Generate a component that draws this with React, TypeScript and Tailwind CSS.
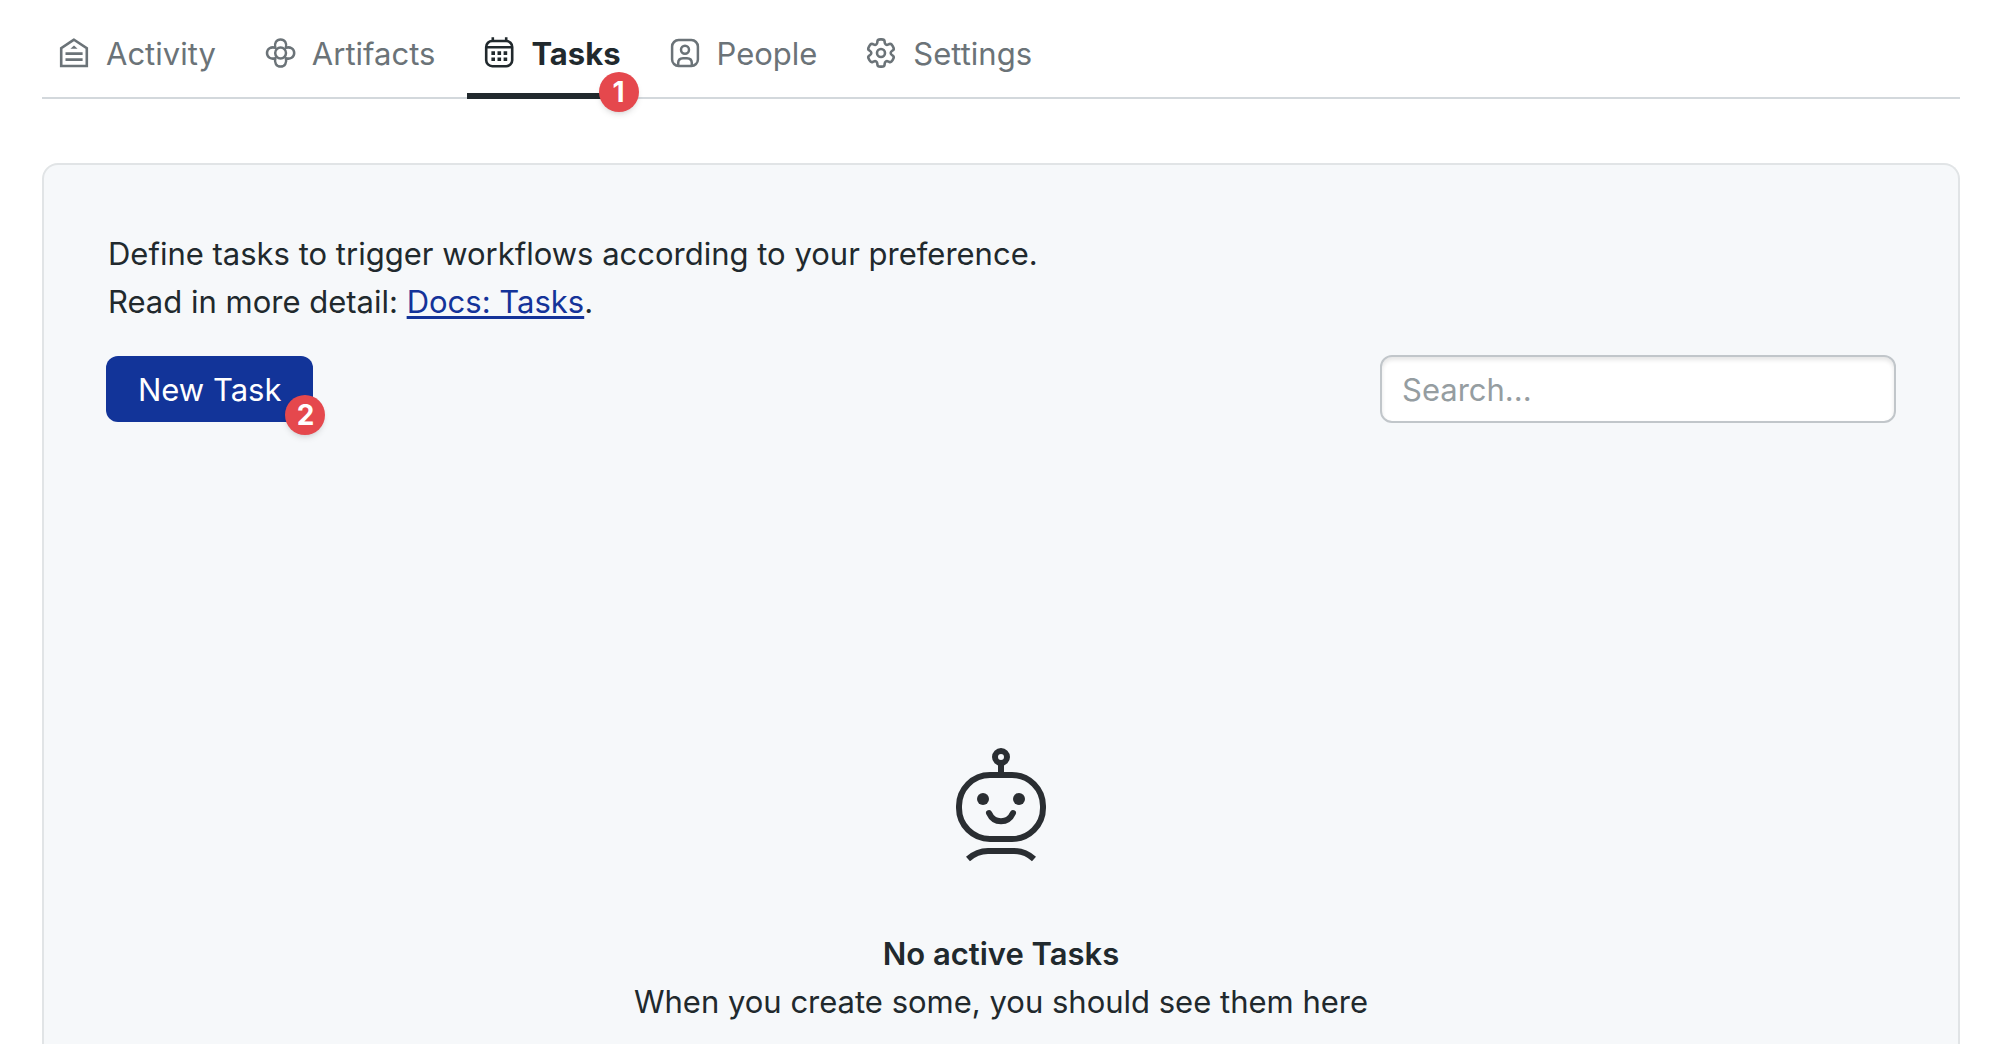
import type { ReactNode } from "react";

function ActivityIcon() {
  return (
    <svg viewBox="0 0 32 32" className="mt-2 size-8 shrink-0" fill="none" stroke="currentColor" strokeWidth="2.6" aria-hidden="true">
      <path d="M16 2.7 L3.2 11.2 V29 H28.8 V11.2 Z" />
      <path d="M7.5 16.6 H24.6 M7.5 22.6 H24.6" />
      <path d="M16 8.4 L19.6 11.8 H12.4 Z" fill="currentColor" stroke="none" />
    </svg>
  );
}

function ArtifactsIcon() {
  return (
    <svg viewBox="0 0 32 32" className="mt-2 size-8 shrink-0" fill="none" stroke="currentColor" strokeWidth="2.5" strokeLinejoin="round" aria-hidden="true">
      <circle cx="16.6" cy="16" r="5.4" />
      <path d="M11.4 10.8 C10 6.4 12.4 2.4 16.6 2.4 S23.2 6.4 21.8 10.8 C26.2 9.4 30.2 11.8 30.2 16 S26.2 22.6 21.8 21.2 C23.2 25.6 20.8 29.6 16.6 29.6 S10 25.6 11.4 21.2 C7 22.6 3 20.2 3 16 S7 9.4 11.4 10.8 Z" />
    </svg>
  );
}

function TasksIcon() {
  return (
    <svg viewBox="0 0 32 32" className="mt-2 size-8 shrink-0" fill="none" stroke="currentColor" strokeWidth="2.6" aria-hidden="true">
      <rect x="3.2" y="4" width="26" height="25.2" rx="6" />
      <path d="M3.2 10.2 H29.2 M9.8 0.2 V4 M23.2 0.2 V4" />
      <path d="M8.4 16.1 H12 M14.5 16.1 H18.1 M20.6 16.1 H24.2 M8.4 22.2 H12 M14.5 22.2 H18.1 M20.6 22.2 H24.2" strokeWidth="3.6" />
    </svg>
  );
}

function PeopleIcon() {
  return (
    <svg viewBox="0 0 32 32" className="mt-2 size-8 shrink-0" fill="none" stroke="currentColor" strokeWidth="2.5" aria-hidden="true">
      <rect x="3.1" y="3.1" width="25.8" height="25.8" rx="6.5" />
      <circle cx="16" cy="12.7" r="4" />
      <path d="M9.2 29 V26 Q9.2 21.2 14 21.2 H18 Q22.8 21.2 22.8 26 V29" />
    </svg>
  );
}

function gearOutline(center: number) {
  const corners: [number, number][] = [];
  for (let tooth = 0; tooth < 6; tooth++) {
    for (const [radius, angle] of [[9.8, -23], [14, -14], [14, 14], [9.8, 23]]) {
      const a = ((tooth * 60 + angle - 90) * Math.PI) / 180;
      corners.push([center + radius * Math.cos(a), center + radius * Math.sin(a)]);
    }
  }
  const along = (p: number[], q: number[], t: number) =>
    `${(p[0] + (q[0] - p[0]) * t).toFixed(2)} ${(p[1] + (q[1] - p[1]) * t).toFixed(2)}`;
  return (
    corners
      .map((c, i) => {
        const prev = corners[(i + 23) % 24];
        const next = corners[(i + 1) % 24];
        return `${i ? "L" : "M"}${along(c, prev, 0.4)} Q${along(c, c, 0)} ${along(c, next, 0.4)}`;
      })
      .join(" ") + " Z"
  );
}

function SettingsIcon() {
  return (
    <svg viewBox="0 0 32 32" className="mt-2 size-8 shrink-0" fill="none" stroke="currentColor" strokeWidth="2.6" strokeLinejoin="round" aria-hidden="true">
      <path d={gearOutline(16)} />
      <circle cx="16" cy="16" r="4" />
    </svg>
  );
}

function RobotIcon() {
  return (
    <svg viewBox="0 0 90 114" className="h-[114px] w-[90px] text-[#2a2e32]" fill="none" stroke="currentColor" strokeWidth="6" aria-hidden="true">
      <circle cx="45" cy="9" r="6" />
      <path d="M45 15 V27" />
      <rect x="3" y="27" width="84" height="64" rx="31" />
      <circle cx="27" cy="51" r="6" fill="currentColor" stroke="none" />
      <circle cx="63" cy="51" r="6" fill="currentColor" stroke="none" />
      <path d="M33 65 C38 76 52 76 57 65" strokeLinecap="round" />
      <path d="M12 111 Q21 103 32 103 H58 Q69 103 78 111" />
    </svg>
  );
}

function Badge({ children, className }: { children: ReactNode; className: string }) {
  return (
    <span
      className={`absolute flex size-10 items-center justify-center rounded-full bg-[#e5484d] text-[28px] leading-none font-bold text-white shadow-md ${className}`}
    >
      {children}
    </span>
  );
}

const tabs = [
  { label: "Activity", icon: <ActivityIcon /> },
  { label: "Artifacts", icon: <ArtifactsIcon /> },
  { label: "Tasks", icon: <TasksIcon />, active: true },
  { label: "People", icon: <PeopleIcon /> },
  { label: "Settings", icon: <SettingsIcon /> },
];

export default function App() {
  return (
    <div className="flex h-screen flex-col overflow-hidden bg-white pr-11 pl-[42px] font-['Inter',sans-serif] text-[31px] leading-[48px] text-[#21292d]">
      <nav className="flex gap-4 pt-[29px] leading-[50px] shadow-[inset_0_-2px_0_#d3d8dc]">
        {tabs.map((tab) => (
          <a
            key={tab.label}
            href="#"
            aria-current={tab.active ? "page" : undefined}
            className={
              tab.active
                ? "relative flex items-start gap-4 border-b-[6px] border-[#21292d] px-4 pb-[14px] font-bold"
                : "flex items-start gap-4 border-b-[6px] border-transparent px-4 pb-[14px] text-[#6b7378]"
            }
          >
            {tab.icon}
            <span>{tab.label}</span>
            {tab.active && <Badge className="-right-0.5 -bottom-[19px]">1</Badge>}
          </a>
        ))}
      </nav>

      <main className="mt-16 flex-1 rounded-t-2xl border-2 border-b-0 border-[#e1e4e6] bg-[#f6f8fa] px-[62px] pt-[65px]">
        <p className="pl-0.5">
          Define tasks to trigger workflows according to your preference.
          <br />
          Read in more detail:{" "}
          <a href="#" className="text-[#143399] underline decoration-3 underline-offset-3">
            Docs: Tasks
          </a>
          .
        </p>

        <div className="mt-[29px] flex items-center justify-between">
          <div className="relative">
            <button type="button" className="h-[66px] rounded-xl bg-[#123499] px-8 pt-0.5 text-white">
              New Task
            </button>
            <Badge className="-right-3 -bottom-[13px]">2</Badge>
          </div>
          <input
            type="search"
            aria-label="Search tasks"
            placeholder="Search..."
            className="h-[68px] w-[516px] rounded-xl border-2 border-[#c1c6ca] bg-white px-5 shadow-[inset_0_3px_4px_rgba(0,0,0,0.1)] placeholder:text-[#959da1]"
          />
        </div>

        <section className="mt-[325px] flex flex-col items-center text-center">
          <RobotIcon />
          <h2 className="mt-[68px] font-semibold">No active Tasks</h2>
          <p>When you create some, you should see them here</p>
        </section>
      </main>
    </div>
  );
}
